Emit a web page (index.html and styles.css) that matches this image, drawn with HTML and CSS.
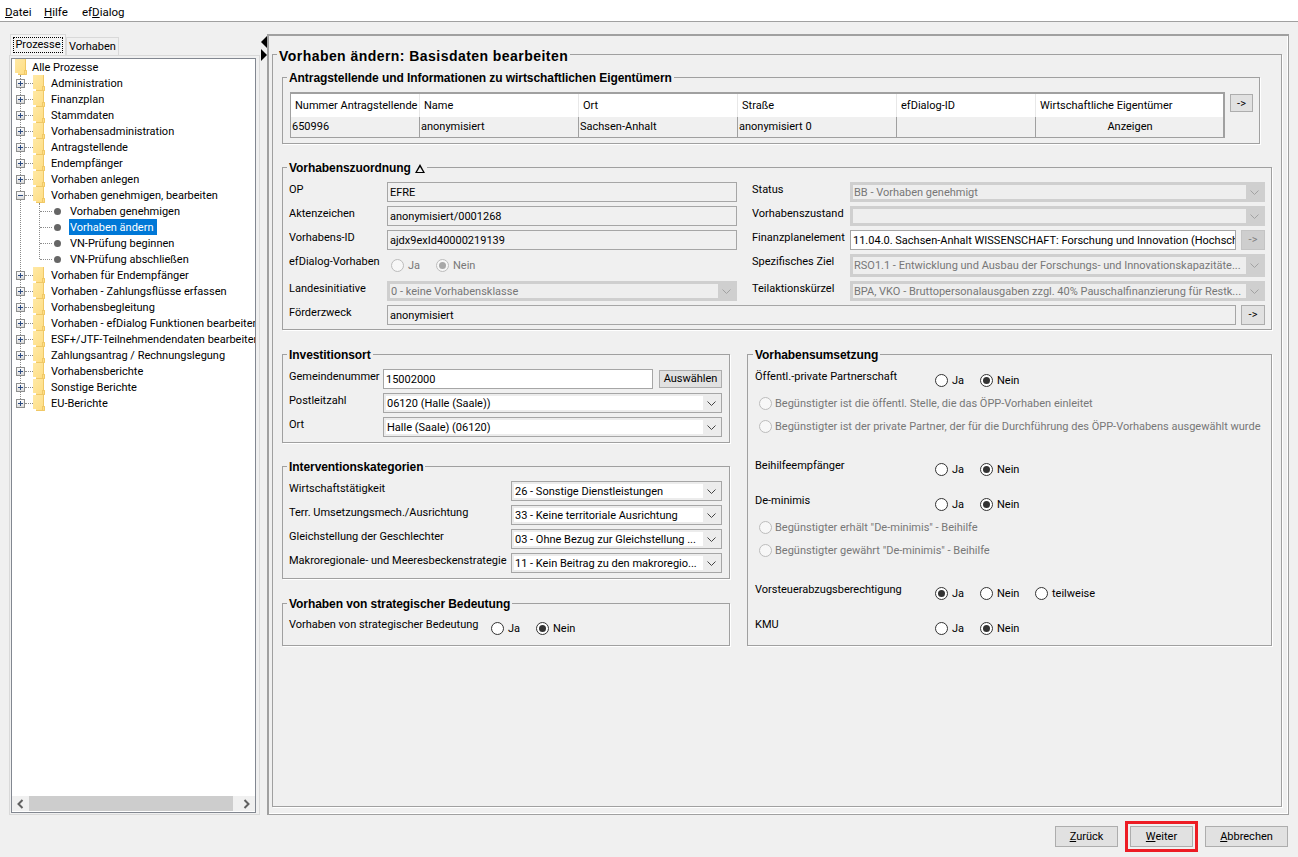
FILE: index.html
```html
<!DOCTYPE html>
<html lang="de">

<head>
    <meta charset="UTF-8">
    <title>Vorhaben ändern</title>
    <link rel="stylesheet" href="styles.css">
</head>

<body>
    <svg class="defs" width="0" height="0">
        <defs>
            <linearGradient id="folder-fill" x1="0" y1="0" x2="1" y2="1">
                <stop offset="0" stop-color="#ffe9a6" />
                <stop offset="1" stop-color="#fedc80" />
            </linearGradient>
            <linearGradient id="box-fill" x1="0" y1="0" x2="0" y2="1">
                <stop offset="0" stop-color="#ffffff" />
                <stop offset="1" stop-color="#d8d8d8" />
            </linearGradient>
            <symbol id="folder" viewBox="0 0 12 16">
                <path d="M0 0H11V11H12V16H3V14H0Z" fill="url(#folder-fill)" />
                <path d="M10.5 0V11M9.5 11V15.5M9.5 11.5H11.5V15.5H3" fill="none" stroke="#f0c866" />
            </symbol>
            <symbol id="plus" viewBox="0 0 9 9">
                <rect x=".5" y=".5" width="8" height="8" fill="url(#box-fill)" stroke="#8e8f8f" />
                <path d="M2 4.5H7M4.5 2V7" stroke="#2b4a80" />
            </symbol>
            <symbol id="minus" viewBox="0 0 9 9">
                <rect x=".5" y=".5" width="8" height="8" fill="url(#box-fill)" stroke="#8e8f8f" />
                <path d="M2 4.5H7" stroke="#2b4a80" />
            </symbol>
            <symbol id="chevron" viewBox="0 0 9 5">
                <path d="M.5 .5L4.5 4.5L8.5 .5" fill="none" />
            </symbol>
        </defs>
    </svg>

    <div class="app">
        <header class="menubar">
            <span class="menu-item"><u>D</u>atei</span>
            <span class="menu-item"><u>H</u>ilfe</span>
            <span class="menu-item">ef<u>D</u>ialog</span>
        </header>

        <div class="workspace">
            <aside class="sidebar">
                <div class="tabs">
                    <div class="tab tab-active"><span class="tab-focus">Prozesse</span></div>
                    <div class="tab">Vorhaben</div>
                </div>
                <div class="tab-page">
                    <div class="tree-box">
                        <div class="tree">
                            <div class="tree-row tree-root"><svg class="folder"><use href="#folder" /></svg><span class="tree-label">Alle Prozesse</span></div>
                            <ul class="branches">
                                <li class="tree-row"><svg class="toggle"><use href="#plus" /></svg><i class="hline"></i><svg class="folder"><use href="#folder" /></svg><span class="tree-label">Administration</span></li>
                                <li class="tree-row"><svg class="toggle"><use href="#plus" /></svg><i class="hline"></i><svg class="folder"><use href="#folder" /></svg><span class="tree-label">Finanzplan</span></li>
                                <li class="tree-row"><svg class="toggle"><use href="#plus" /></svg><i class="hline"></i><svg class="folder"><use href="#folder" /></svg><span class="tree-label">Stammdaten</span></li>
                                <li class="tree-row"><svg class="toggle"><use href="#plus" /></svg><i class="hline"></i><svg class="folder"><use href="#folder" /></svg><span class="tree-label">Vorhabensadministration</span></li>
                                <li class="tree-row"><svg class="toggle"><use href="#plus" /></svg><i class="hline"></i><svg class="folder"><use href="#folder" /></svg><span class="tree-label">Antragstellende</span></li>
                                <li class="tree-row"><svg class="toggle"><use href="#plus" /></svg><i class="hline"></i><svg class="folder"><use href="#folder" /></svg><span class="tree-label">Endempfänger</span></li>
                                <li class="tree-row"><svg class="toggle"><use href="#plus" /></svg><i class="hline"></i><svg class="folder"><use href="#folder" /></svg><span class="tree-label">Vorhaben anlegen</span></li>
                                <li class="tree-row"><svg class="toggle"><use href="#minus" /></svg><i class="hline"></i><svg class="folder"><use href="#folder" /></svg><span class="tree-label">Vorhaben genehmigen, bearbeiten</span></li>
                                <li>
                                    <ul class="leaves">
                                        <li class="leaf-row"><i class="hline-long"></i><i class="bullet"></i><span class="leaf-label">Vorhaben genehmigen</span></li>
                                        <li class="leaf-row"><i class="hline-long"></i><i class="bullet"></i><span class="leaf-label leaf-selected">Vorhaben ändern</span></li>
                                        <li class="leaf-row"><i class="hline-long"></i><i class="bullet"></i><span class="leaf-label">VN-Prüfung beginnen</span></li>
                                        <li class="leaf-row"><i class="hline-long"></i><i class="bullet"></i><span class="leaf-label">VN-Prüfung abschließen</span></li>
                                    </ul>
                                </li>
                                <li class="tree-row"><svg class="toggle"><use href="#plus" /></svg><i class="hline"></i><svg class="folder"><use href="#folder" /></svg><span class="tree-label">Vorhaben für Endempfänger</span></li>
                                <li class="tree-row"><svg class="toggle"><use href="#plus" /></svg><i class="hline"></i><svg class="folder"><use href="#folder" /></svg><span class="tree-label">Vorhaben - Zahlungsflüsse erfassen</span></li>
                                <li class="tree-row"><svg class="toggle"><use href="#plus" /></svg><i class="hline"></i><svg class="folder"><use href="#folder" /></svg><span class="tree-label">Vorhabensbegleitung</span></li>
                                <li class="tree-row"><svg class="toggle"><use href="#plus" /></svg><i class="hline"></i><svg class="folder"><use href="#folder" /></svg><span class="tree-label">Vorhaben - efDialog Funktionen bearbeiten</span></li>
                                <li class="tree-row"><svg class="toggle"><use href="#plus" /></svg><i class="hline"></i><svg class="folder"><use href="#folder" /></svg><span class="tree-label">ESF+/JTF-Teilnehmendendaten bearbeiten</span></li>
                                <li class="tree-row"><svg class="toggle"><use href="#plus" /></svg><i class="hline"></i><svg class="folder"><use href="#folder" /></svg><span class="tree-label">Zahlungsantrag / Rechnungslegung</span></li>
                                <li class="tree-row"><svg class="toggle"><use href="#plus" /></svg><i class="hline"></i><svg class="folder"><use href="#folder" /></svg><span class="tree-label">Vorhabensberichte</span></li>
                                <li class="tree-row"><svg class="toggle"><use href="#plus" /></svg><i class="hline"></i><svg class="folder"><use href="#folder" /></svg><span class="tree-label">Sonstige Berichte</span></li>
                                <li class="tree-row"><svg class="toggle"><use href="#plus" /></svg><i class="hline"></i><svg class="folder"><use href="#folder" /></svg><span class="tree-label">EU-Berichte</span></li>
                            </ul>
                        </div>
                        <div class="hscroll">
                            <span class="hscroll-btn"><svg class="scroll-arrow" viewBox="0 0 7 10"><path d="M5.5 1L1.5 5L5.5 9" /></svg></span>
                            <span class="hscroll-thumb"></span>
                            <span class="hscroll-btn hscroll-end"><svg class="scroll-arrow" viewBox="0 0 7 10"><path d="M1.5 1L5.5 5L1.5 9" /></svg></span>
                        </div>
                    </div>
                </div>
            </aside>

            <div class="splitter">
                <i class="split-left"></i>
                <i class="split-right"></i>
            </div>

            <main class="content">
                <fieldset class="page-group">
                    <legend class="page-title">Vorhaben ändern: Basisdaten bearbeiten</legend>

                    <fieldset class="group group-owners">
                        <legend>Antragstellende und Informationen zu wirtschaftlichen Eigentümern</legend>
                        <div class="owners">
                            <table class="owner-table">
                                <colgroup>
                                    <col class="col-nr">
                                    <col class="col-name">
                                    <col class="col-ort">
                                    <col class="col-str">
                                    <col class="col-id">
                                    <col class="col-eig">
                                </colgroup>
                                <thead>
                                    <tr>
                                        <th>Nummer Antragstellende</th>
                                        <th>Name</th>
                                        <th>Ort</th>
                                        <th>Straße</th>
                                        <th>efDialog-ID</th>
                                        <th>Wirtschaftliche Eigentümer</th>
                                    </tr>
                                </thead>
                                <tbody>
                                    <tr>
                                        <td>650996</td>
                                        <td>anonymisiert</td>
                                        <td>Sachsen-Anhalt</td>
                                        <td>anonymisiert 0</td>
                                        <td></td>
                                        <td class="cell-center">Anzeigen</td>
                                    </tr>
                                </tbody>
                            </table>
                            <button class="btn-arrow btn-arrow-table">-&gt;</button>
                        </div>
                    </fieldset>

                    <fieldset class="group group-assign">
                        <legend>Vorhabenszuordnung <span class="collapse-mark"></span></legend>
                        <div class="assign-grid">
                            <label class="field-label">OP</label>
                            <div class="text-field">EFRE</div>
                            <label class="field-label">Status</label>
                            <div class="combo combo-off"><span class="combo-text">BB - Vorhaben genehmigt</span><svg class="chevron"><use href="#chevron" /></svg></div>

                            <label class="field-label">Aktenzeichen</label>
                            <div class="text-field">anonymisiert/0001268</div>
                            <label class="field-label">Vorhabenszustand</label>
                            <div class="combo combo-off"><span class="combo-text"></span><svg class="chevron"><use href="#chevron" /></svg></div>

                            <label class="field-label">Vorhabens-ID</label>
                            <div class="text-field">ajdx9exId40000219139</div>
                            <label class="field-label">Finanzplanelement</label>
                            <div class="field-with-btn">
                                <div class="text-field text-white">11.04.0. Sachsen-Anhalt WISSENSCHAFT: Forschung und Innovation (Hochsch</div>
                                <button class="btn-arrow btn-off">-&gt;</button>
                            </div>

                            <label class="field-label">efDialog-Vorhaben</label>
                            <div class="radio-group radio-group-off">
                                <span class="radio-opt opt-ja"><i class="radio"></i>Ja</span>
                                <span class="radio-opt opt-nein"><i class="radio radio-on"></i>Nein</span>
                            </div>
                            <label class="field-label">Spezifisches Ziel</label>
                            <div class="combo combo-off combo-tall"><span class="combo-text">RSO1.1 - Entwicklung und Ausbau der Forschungs- und Innovationskapazitäte...</span><svg class="chevron"><use href="#chevron" /></svg></div>

                            <label class="field-label">Landesinitiative</label>
                            <div class="combo combo-off"><span class="combo-text">0 - keine Vorhabensklasse</span><svg class="chevron"><use href="#chevron" /></svg></div>
                            <label class="field-label">Teilaktionskürzel</label>
                            <div class="combo combo-off"><span class="combo-text">BPA, VKO - Bruttopersonalausgaben zzgl. 40% Pauschalfinanzierung für Restk...</span><svg class="chevron"><use href="#chevron" /></svg></div>

                            <label class="field-label">Förderzweck</label>
                            <div class="field-with-btn field-wide">
                                <div class="text-field">anonymisiert</div>
                                <button class="btn-arrow">-&gt;</button>
                            </div>
                        </div>
                    </fieldset>

                    <div class="columns">
                        <div class="column">
                            <fieldset class="group group-place">
                                <legend>Investitionsort</legend>
                                <div class="form-grid form-place">
                                    <label class="field-label">Gemeindenummer</label>
                                    <div class="field-with-search">
                                        <div class="text-field text-white">15002000</div>
                                        <button class="btn-small">Auswählen</button>
                                    </div>
                                    <label class="field-label">Postleitzahl</label>
                                    <div class="combo"><span class="combo-text">06120 (Halle (Saale))</span><svg class="chevron"><use href="#chevron" /></svg></div>
                                    <label class="field-label">Ort</label>
                                    <div class="combo"><span class="combo-text">Halle (Saale) (06120)</span><svg class="chevron"><use href="#chevron" /></svg></div>
                                </div>
                            </fieldset>

                            <fieldset class="group group-categories">
                                <legend>Interventionskategorien</legend>
                                <div class="form-grid form-categories">
                                    <label class="field-label">Wirtschaftstätigkeit</label>
                                    <div class="combo"><span class="combo-text">26 - Sonstige Dienstleistungen</span><svg class="chevron"><use href="#chevron" /></svg></div>
                                    <label class="field-label">Terr. Umsetzungsmech./Ausrichtung</label>
                                    <div class="combo"><span class="combo-text">33 - Keine territoriale Ausrichtung</span><svg class="chevron"><use href="#chevron" /></svg></div>
                                    <label class="field-label">Gleichstellung der Geschlechter</label>
                                    <div class="combo"><span class="combo-text">03 - Ohne Bezug zur Gleichstellung ...</span><svg class="chevron"><use href="#chevron" /></svg></div>
                                    <label class="field-label">Makroregionale- und Meeresbeckenstrategie</label>
                                    <div class="combo"><span class="combo-text">11 - Kein Beitrag zu den makroregio...</span><svg class="chevron"><use href="#chevron" /></svg></div>
                                </div>
                            </fieldset>

                            <fieldset class="group group-strategic">
                                <legend>Vorhaben von strategischer Bedeutung</legend>
                                <div class="radio-row row-strategic">
                                    <label class="field-label">Vorhaben von strategischer Bedeutung</label>
                                    <div class="radio-group">
                                        <span class="radio-opt opt-ja"><i class="radio"></i>Ja</span>
                                        <span class="radio-opt opt-nein"><i class="radio radio-on"></i>Nein</span>
                                    </div>
                                </div>
                            </fieldset>
                        </div>

                        <fieldset class="group group-impl">
                            <legend>Vorhabensumsetzung</legend>
                            <div class="radio-row">
                                <label class="field-label">Öffentl.-private Partnerschaft</label>
                                <div class="radio-group">
                                    <span class="radio-opt opt-ja"><i class="radio"></i>Ja</span>
                                    <span class="radio-opt opt-nein"><i class="radio radio-on"></i>Nein</span>
                                </div>
                            </div>
                            <div class="sub-radio"><i class="radio"></i>Begünstigter ist die öffentl. Stelle, die das ÖPP-Vorhaben einleitet</div>
                            <div class="sub-radio"><i class="radio"></i>Begünstigter ist der private Partner, der für die Durchführung des ÖPP-Vorhabens ausgewählt wurde</div>
                            <div class="radio-row row-far">
                                <label class="field-label">Beihilfeempfänger</label>
                                <div class="radio-group">
                                    <span class="radio-opt opt-ja"><i class="radio"></i>Ja</span>
                                    <span class="radio-opt opt-nein"><i class="radio radio-on"></i>Nein</span>
                                </div>
                            </div>
                            <div class="radio-row row-mid">
                                <label class="field-label">De-minimis</label>
                                <div class="radio-group">
                                    <span class="radio-opt opt-ja"><i class="radio"></i>Ja</span>
                                    <span class="radio-opt opt-nein"><i class="radio radio-on"></i>Nein</span>
                                </div>
                            </div>
                            <div class="sub-radio"><i class="radio"></i>Begünstigter erhält "De-minimis" - Beihilfe</div>
                            <div class="sub-radio"><i class="radio"></i>Begünstigter gewährt "De-minimis" - Beihilfe</div>
                            <div class="radio-row row-far">
                                <label class="field-label">Vorsteuerabzugsberechtigung</label>
                                <div class="radio-group">
                                    <span class="radio-opt opt-ja"><i class="radio radio-on"></i>Ja</span>
                                    <span class="radio-opt opt-nein"><i class="radio"></i>Nein</span>
                                    <span class="radio-opt"><i class="radio"></i>teilweise</span>
                                </div>
                            </div>
                            <div class="radio-row row-mid">
                                <label class="field-label">KMU</label>
                                <div class="radio-group">
                                    <span class="radio-opt opt-ja"><i class="radio"></i>Ja</span>
                                    <span class="radio-opt opt-nein"><i class="radio radio-on"></i>Nein</span>
                                </div>
                            </div>
                        </fieldset>
                    </div>
                </fieldset>
            </main>
        </div>

        <footer class="actions">
            <button class="btn"><u>Z</u>urück</button>
            <div class="highlight"><button class="btn"><u>W</u>eiter</button></div>
            <button class="btn btn-wide"><u>A</u>bbrechen</button>
        </footer>
    </div>
</body>

</html>
```
FILE: styles.css
```css
* {
    box-sizing: border-box;
}

html,
body {
    margin: 0;
    height: 100%;
}

body {
    background-color: #f0f0f0;
    color: #000;
    font-family: Roboto, "Liberation Sans", sans-serif;
    font-size: 11px;
    overflow: hidden;
}

ul {
    list-style: none;
    margin: 0;
    padding: 0;
}

.defs {
    position: absolute;
}

.app {
    display: flex;
    flex-direction: column;
    height: 857px;
}

/* menu */

.menubar {
    display: flex;
    height: 22px;
    padding-left: 5px;
    background-color: #fff;
    border-bottom: 1px solid #a0a0a0;
    font-size: 11.5px;
    line-height: 24px;
}

.menu-item:nth-child(1) {
    width: 39px;
}

.menu-item:nth-child(2) {
    width: 38px;
}

/* left side */

.workspace {
    display: flex;
    height: 793px;
    padding: 12px 0 0 9px;
}

.sidebar {
    display: flex;
    flex-direction: column;
    width: 251px;
}

.tabs {
    display: flex;
    align-items: flex-end;
    height: 21px;
    padding-left: 1px;
}

.tab {
    height: 18px;
    width: 53px;
    border: 1px solid #d9d9d9;
    border-bottom: 0;
    line-height: 17px;
    text-align: center;
}

.tab-active {
    width: 56px;
    height: 21px;
    padding: 2px 2px 0;
    background-color: #f4f4f4;
}

.tab-focus {
    display: block;
    height: 16px;
    border: 1px dotted #000;
    line-height: 13px;
}

.tab-page {
    width: 251px;
    height: 760px;
    padding: 2px 3px 1px 1px;
    border: 1px solid #d9d9d9;
}

.tree-box {
    display: flex;
    flex-direction: column;
    height: 755px;
    border: 1px solid #828790;
    background-color: #fff;
}

.tree {
    flex: 1;
    overflow: hidden;
    white-space: nowrap;
}

.tree-row,
.leaf-row {
    display: flex;
    align-items: center;
    height: 16px;
}

.tree-label,
.leaf-label {
    height: 16px;
    line-height: 18px;
}

.tree-root {
    padding-left: 3px;
}

.tree-root .tree-label {
    margin-left: 5px;
}

.branches {
    position: relative;
}

.branches::before {
    content: "";
    position: absolute;
    left: 8px;
    top: 0;
    bottom: 8px;
    border-left: 1px dotted #8a8a8a;
}

.branches > .tree-row {
    padding-left: 4px;
}

.toggle {
    position: relative;
    width: 9px;
    height: 9px;
    flex: none;
}

.hline {
    width: 8px;
    flex: none;
    border-top: 1px dotted #8a8a8a;
}

.folder {
    width: 12px;
    height: 16px;
    flex: none;
}

.tree-label {
    margin-left: 6px;
}

.leaves {
    position: relative;
    padding-left: 28px;
}

.leaves::before {
    content: "";
    position: absolute;
    left: 27px;
    top: 0;
    bottom: 8px;
    border-left: 1px dotted #8a8a8a;
}

.hline-long {
    width: 12px;
    flex: none;
    border-top: 1px dotted #8a8a8a;
}

.bullet {
    width: 7px;
    height: 7px;
    flex: none;
    margin-left: 2px;
    border-radius: 50%;
    background-color: #666;
}

.leaf-label {
    margin-left: 8px;
    padding: 0 1px;
}

.leaf-selected {
    padding-right: 3px;
    background-color: #0078d7;
    color: #fff;
}

.hscroll {
    display: flex;
    height: 15px;
    margin-bottom: 1px;
    background-color: #f0f0f0;
}

.hscroll-btn {
    display: flex;
    align-items: center;
    justify-content: center;
    width: 17px;
    flex: none;
}

.hscroll-end {
    width: 22px;
    padding-left: 4px;
}

.hscroll-thumb {
    flex: 1;
    background-color: #cdcdcd;
}

.scroll-arrow {
    width: 7px;
    height: 10px;
}

.scroll-arrow path {
    fill: none;
    stroke: #606060;
    stroke-width: 2;
}

/* splitter */

.splitter {
    display: flex;
    flex-direction: column;
    gap: 1px;
    width: 7px;
    padding-top: 2px;
}

.split-left {
    width: 0;
    height: 0;
    margin-left: 1px;
    border-style: solid;
    border-width: 6px 6px 6px 0;
    border-color: transparent #000 transparent transparent;
}

.split-right {
    width: 0;
    height: 0;
    margin-left: 1px;
    border-style: solid;
    border-width: 6px 0 6px 6px;
    border-color: transparent transparent transparent #000;
}

/* right side */

.content {
    width: 1022px;
    height: 781px;
    padding: 10px 6px 8px 3px;
    border: 1px solid #a0a0a0;
    border-top-width: 2px;
    border-left-width: 2px;
    box-shadow: inset -1px -1px 0 #fff;
}

fieldset {
    min-width: 0;
    margin: 0;
    border: 1px solid #a0a0a0;
    box-shadow: 1px 1px 0 #fff;
}

.page-group {
    height: 761px;
    padding: 7px 9px 0;
}

.page-title {
    margin-left: -5px;
    padding: 4px 2px 0;
    font-family: "Liberation Sans", sans-serif;
    font-size: 14px;
    font-weight: bold;
    letter-spacing: .45px;
    line-height: 13px;
}

.group {
    margin-bottom: 16px;
    padding: 7px 6px 4px;
}

.group legend {
    margin-left: -2px;
    padding: 2px 2px 0;
    font-family: "Liberation Sans", sans-serif;
    font-size: 12px;
    font-weight: bold;
    letter-spacing: -.07px;
    line-height: 13px;
}

.group-owners {
    margin-right: 12px;
    padding: 7px 5px 5px 7px;
}

.group.group-owners legend {
    margin-left: -3px;
}

.group-assign {
    margin-bottom: 17px;
}

.group-place,
.group-categories {
    padding-bottom: 5px;
}

.group-categories {
    margin-bottom: 17px;
}

.owners {
    display: flex;
    align-items: flex-start;
    gap: 5px;
}

.owner-table {
    width: 935px;
    flex: none;
    table-layout: fixed;
    border-collapse: collapse;
    border: 1px solid #a0a0a0;
    border-width: 2px 2px 1px 1px;
}

.col-nr {
    width: 129px;
}

.col-name {
    width: 159px;
}

.col-ort {
    width: 159px;
}

.col-str {
    width: 159px;
}

.col-id {
    width: 139px;
}

.owner-table th {
    height: 24px;
    padding: 0 0 0 4px;
    background-color: #fff;
    border-right: 1px solid #e8e8e8;
    font-weight: normal;
    text-align: left;
    white-space: nowrap;
}

.owner-table td {
    height: 20px;
    padding: 0 0 0 1px;
    border-right: 1px solid #a0a0a0;
}

.owner-table .cell-center {
    text-align: center;
}

.btn-arrow {
    width: 24px;
    height: 20px;
    flex: none;
    padding: 0;
    background-color: #e1e1e1;
    border: 1px solid #adadad;
    color: #000;
    font: inherit;
}

.btn-arrow-table {
    width: 23px;
    height: 18px;
    margin-top: 2px;
}

.btn-off {
    background-color: #cecece;
    border-color: #c4c4c4;
    color: #808080;
}

.collapse-mark {
    display: inline-block;
    width: 0;
    height: 0;
    margin-left: 1px;
    vertical-align: -1px;
    border-left: 5px solid transparent;
    border-right: 5px solid transparent;
    border-bottom: 9px solid #000;
    position: relative;
}

.collapse-mark::after {
    content: "";
    position: absolute;
    left: -3px;
    top: 3px;
    width: 0;
    height: 0;
    border-left: 3px solid transparent;
    border-right: 3px solid transparent;
    border-bottom: 5px solid #f0f0f0;
}

.assign-grid {
    display: grid;
    grid-template-columns: 98px 350px 113px 415px;
    grid-template-rows: 20px 20px 20px 23px 20px 20px;
    row-gap: 4px;
}

.assign-grid > .field-label:nth-child(4n + 3) {
    margin-left: 15px;
}

.field-label {
    line-height: 16px;
    white-space: nowrap;
}

.radio-row .field-label {
    line-height: 14px;
}

.text-field {
    flex: 1;
    min-width: 0;
    height: 20px;
    padding-left: 2px;
    overflow: hidden;
    border: 1px solid #a6a6a6;
    line-height: 19px;
    white-space: nowrap;
}

.text-white {
    background-color: #fff;
}

.field-with-btn {
    display: flex;
    gap: 5px;
}

.field-wide {
    grid-column: 2 / -1;
}

.field-with-search {
    display: flex;
    gap: 6px;
}

.combo {
    display: flex;
    align-items: center;
    justify-content: space-between;
    height: 20px;
    padding: 2px;
    background-color: #ececec;
    border: 1px solid #a6a6a6;
}

.combo-text {
    flex: 1;
    min-width: 0;
    height: 14px;
    margin-right: 3px;
    padding-left: 1px;
    overflow: hidden;
    background-color: #fff;
    line-height: 16px;
    white-space: nowrap;
}

.chevron {
    width: 9px;
    height: 5px;
    flex: none;
    margin: 1px 3px 0 1px;
    stroke: #444;
}

.combo-off {
    background-color: #cfcfcf;
    border-color: #cfcfcf;
}

.combo-off .combo-text {
    background-color: #eeeeee;
    color: #777;
}

.combo-off .chevron {
    stroke: #a2a2a2;
}

.combo-tall {
    height: 23px;
}

.combo-tall .combo-text {
    height: 17px;
    line-height: 17px;
}

.radio-group {
    display: flex;
    padding-top: 4px;
}

.assign-grid .radio-group {
    padding: 5px 0 0 4px;
}

.radio-opt {
    display: flex;
    align-items: center;
    height: 14px;
    line-height: 14px;
}

.opt-ja {
    width: 45px;
}

.opt-nein {
    width: 55px;
}

.radio {
    position: relative;
    width: 13px;
    height: 13px;
    flex: none;
    margin-right: 4px;
    background-color: #fff;
    border: 1px solid #333;
    border-radius: 50%;
}

.radio-on::after {
    content: "";
    position: absolute;
    left: 2px;
    top: 2px;
    width: 7px;
    height: 7px;
    border-radius: 50%;
    background-color: #333;
}

.radio-group-off .radio-opt,
.sub-radio {
    color: #777;
}

.radio-group-off .radio,
.sub-radio .radio {
    background-color: #f7f7f7;
    border-color: #bcbcbc;
}

.radio-group-off .radio-on::after {
    background-color: #a8a8a8;
}

.columns {
    display: grid;
    grid-template-columns: 448px 525px;
    column-gap: 17px;
}

.form-grid {
    display: grid;
    grid-auto-rows: 20px;
    row-gap: 4px;
}

.form-place {
    grid-template-columns: 94px 339px;
}

.form-categories {
    grid-template-columns: 222px 211px;
}

.btn-small {
    width: 63px;
    height: 18px;
    margin-top: 1px;
    padding: 0;
    background-color: #e1e1e1;
    border: 1px solid #adadad;
    color: #000;
    font: inherit;
}

.group.group-strategic {
    margin-bottom: 0;
    padding: 7px 6px 9px;
}

.radio-row {
    display: grid;
    grid-template-columns: 180px 1fr;
}

.row-strategic {
    grid-template-columns: 202px 1fr;
}

.group.group-impl {
    margin-bottom: 0;
    padding: 8px 7px 0;
}

.sub-radio {
    display: flex;
    align-items: center;
    height: 14px;
    margin-top: 9px;
    padding-left: 4px;
    white-space: nowrap;
}

.sub-radio .radio {
    margin-right: 3px;
}

.row-far {
    margin-top: 25px;
}

.row-mid {
    margin-top: 17px;
}

/* buttons */

.actions {
    display: flex;
    align-items: center;
    justify-content: flex-end;
    gap: 7px;
    height: 42px;
    padding-right: 10px;
}

.btn {
    display: block;
    width: 63px;
    height: 21px;
    padding: 0;
    background-color: #e1e1e1;
    border: 1px solid #adadad;
    color: #000;
    font: inherit;
}

.btn-wide {
    width: 83px;
}

.highlight {
    padding: 2px;
    border: 3px solid #ed1c24;
}
```
